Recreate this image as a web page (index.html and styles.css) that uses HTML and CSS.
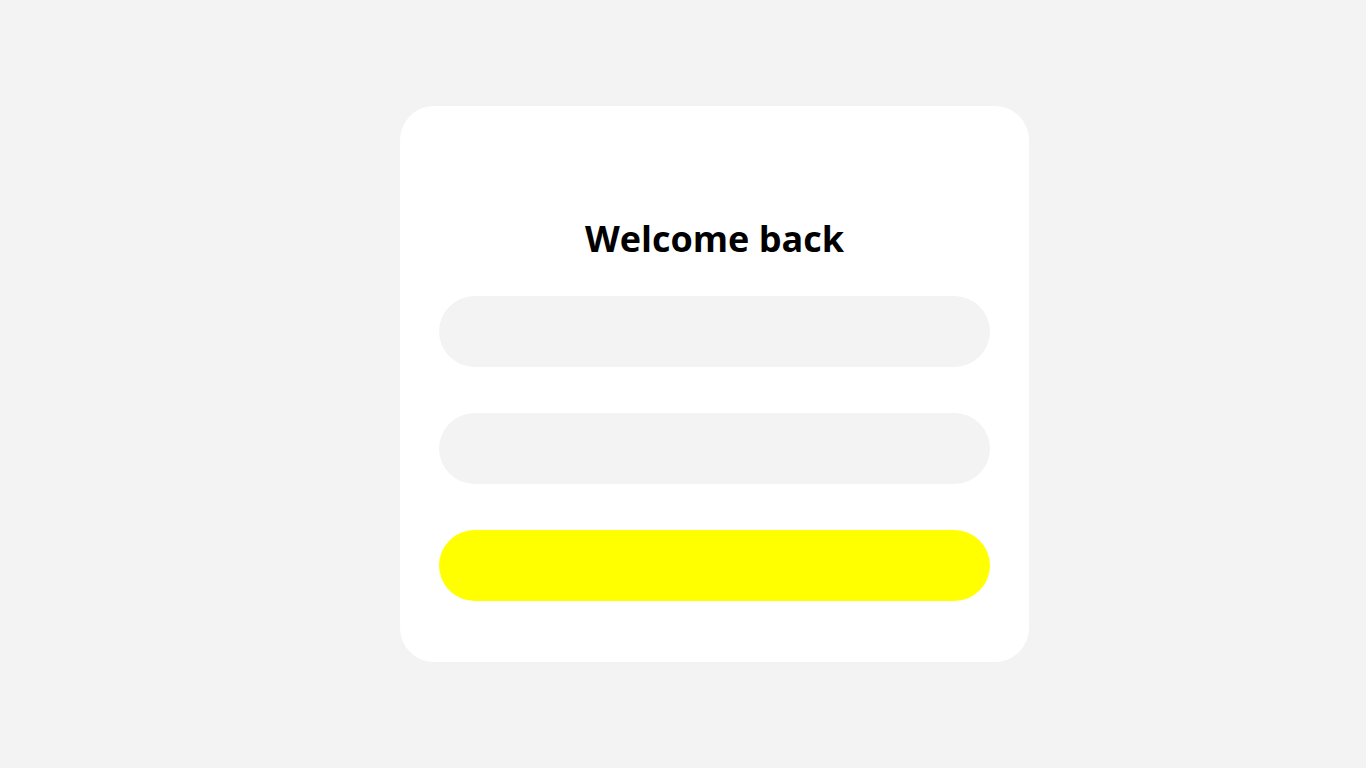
FILE: index.html
```html
<!DOCTYPE html>
<html lang="en">
<head>
<meta charset="utf-8">
<title>Welcome back</title>
<link rel="stylesheet" href="styles.css">
</head>
<body>
<main class="page">
  <form class="card">
    <h1 class="title">Welcome back</h1>
    <input class="field" type="text" aria-label="Email">
    <input class="field" type="password" aria-label="Password">
    <button class="submit" type="submit" aria-label="Sign in"></button>
  </form>
</main>
</body>
</html>
```
FILE: styles.css
```css
html, body {
  margin: 0;
  padding: 0;
  height: 100%;
}
body {
  background: #f3f3f3;
  font-family: "Open Sans", "Liberation Sans", sans-serif;
}
.page {
  height: 100%;
  box-sizing: border-box;
  padding-left: 63px;
  display: flex;
  align-items: center;
  justify-content: center;
}
.card {
  width: 629px;
  height: 556px;
  box-sizing: border-box;
  background: #ffffff;
  border-radius: 34px;
  padding: 107px 39px 0;
  display: flex;
  flex-direction: column;
}
.title {
  margin: 0 0 31px;
  font-size: 36px;
  line-height: 52px;
  font-weight: 700;
  color: #000;
  text-align: center;
}
.field, .submit {
  display: block;
  width: 100%;
  height: 71px;
  border: none;
  border-radius: 36px;
  margin: 0 0 46px;
  padding: 0 34px;
  box-sizing: border-box;
  font: inherit;
  outline: none;
}
.field {
  background: #f3f3f3;
}
.submit {
  background: #ffff00;
  margin-bottom: 0;
  cursor: pointer;
}
```
